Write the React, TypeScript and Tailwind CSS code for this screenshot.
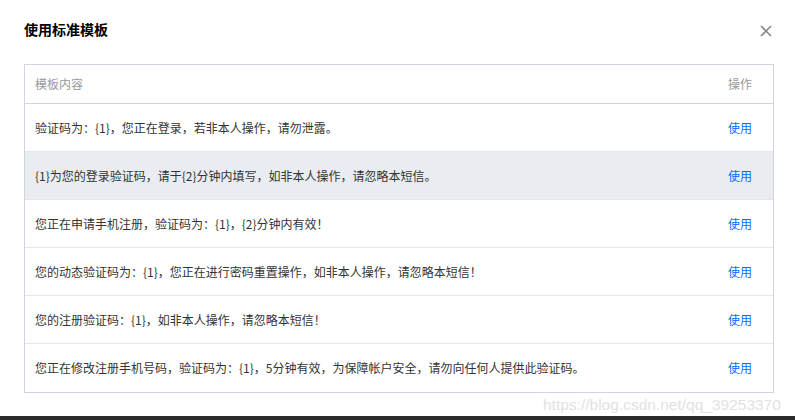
import React from 'react';

const templates = [
  '验证码为：{1}，您正在登录，若非本人操作，请勿泄露。',
  '{1}为您的登录验证码，请于{2}分钟内填写，如非本人操作，请忽略本短信。',
  '您正在申请手机注册，验证码为：{1}，{2}分钟内有效！',
  '您的动态验证码为：{1}，您正在进行密码重置操作，如非本人操作，请忽略本短信！',
  '您的注册验证码：{1}，如非本人操作，请忽略本短信！',
  '您正在修改注册手机号码，验证码为：{1}，5分钟有效，为保障帐户安全，请勿向任何人提供此验证码。',
];

const font = { fontFamily: '"Noto Sans CJK SC", "Noto Sans", sans-serif' };

export default function App() {
  return (
    <div className="relative flex h-[420px] w-[795px] flex-col bg-white" style={font}>
      <div className="flex-1 px-6 pt-[19px]">
        <div className="flex h-5 items-center justify-between">
          <h3 className="text-[14px] font-bold leading-5 text-black">使用标准模板</h3>
          <button className="mr-[-1px] mt-[4px] flex h-3 w-3 items-center justify-center text-[#888]" aria-label="关闭">
            <svg viewBox="0 0 12 12" className="h-3 w-3" fill="none" stroke="currentColor" strokeWidth="1.6">
              <path d="M1 1L11 11M11 1L1 11" />
            </svg>
          </button>
        </div>

        <div className="mt-[25px] w-[750px] border border-[#cfd5de]">
          <div className="flex h-[39px] items-center justify-between border-b border-[#cfd5de] pl-[10px] pr-[21px] text-[12px] text-[#999]">
            <span>模板内容</span>
            <span>操作</span>
          </div>
          {templates.map((text, index) => (
            <div
              key={text}
              className={
                'flex h-[48px] items-center justify-between pl-[10px] pr-[21px] text-[12px] ' +
                (index < templates.length - 1 ? 'border-b border-[#e5e5e5] ' : 'h-[47px] ') +
                (index === 1 ? 'bg-[#e9ecf1]' : 'bg-white')
              }
            >
              <span className="text-[#333]">{text}</span>
              <a className="cursor-pointer text-[#006eff]">使用</a>
            </div>
          ))}
        </div>
      </div>

      <div className="h-[4px] bg-[#2b2b2b]" />

      <span
        className="pointer-events-none absolute left-[543px] top-[395px] whitespace-nowrap text-[15.5px] leading-5 text-[#e2e2e2]"
        style={{ fontFamily: '"Liberation Sans", Arial, sans-serif' }}
      >
        https://blog.csdn.net/qq_39253370
      </span>
    </div>
  );
}
